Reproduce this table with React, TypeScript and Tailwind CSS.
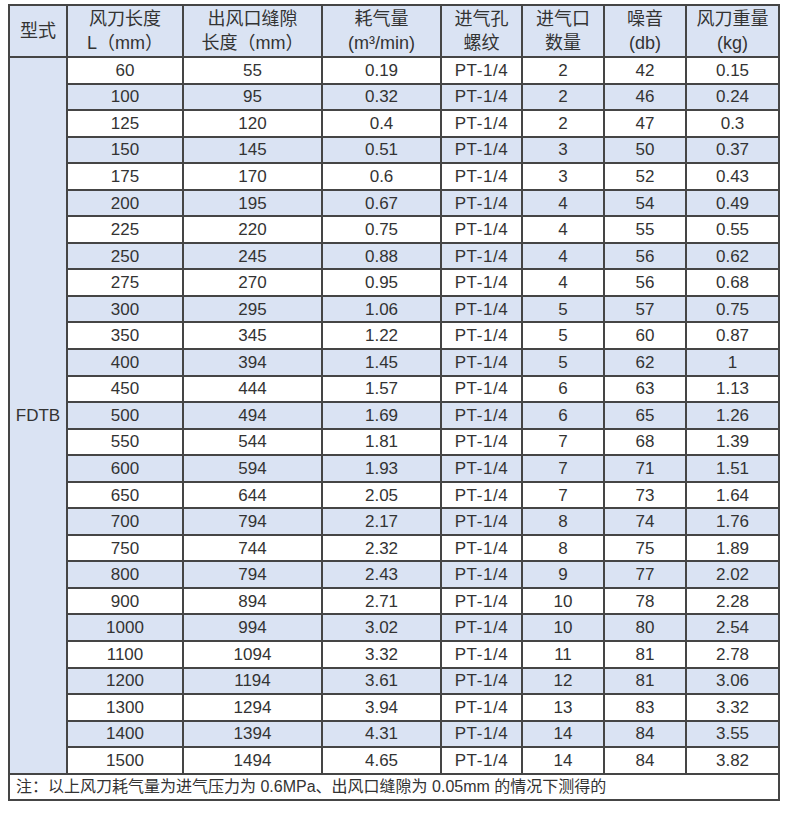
const rows: string[][] = [
  ["60", "55", "0.19", "2", "42", "0.15"],
  ["100", "95", "0.32", "2", "46", "0.24"],
  ["125", "120", "0.4", "2", "47", "0.3"],
  ["150", "145", "0.51", "3", "50", "0.37"],
  ["175", "170", "0.6", "3", "52", "0.43"],
  ["200", "195", "0.67", "4", "54", "0.49"],
  ["225", "220", "0.75", "4", "55", "0.55"],
  ["250", "245", "0.88", "4", "56", "0.62"],
  ["275", "270", "0.95", "4", "56", "0.68"],
  ["300", "295", "1.06", "5", "57", "0.75"],
  ["350", "345", "1.22", "5", "60", "0.87"],
  ["400", "394", "1.45", "5", "62", "1"],
  ["450", "444", "1.57", "6", "63", "1.13"],
  ["500", "494", "1.69", "6", "65", "1.26"],
  ["550", "544", "1.81", "7", "68", "1.39"],
  ["600", "594", "1.93", "7", "71", "1.51"],
  ["650", "644", "2.05", "7", "73", "1.64"],
  ["700", "794", "2.17", "8", "74", "1.76"],
  ["750", "744", "2.32", "8", "75", "1.89"],
  ["800", "794", "2.43", "9", "77", "2.02"],
  ["900", "894", "2.71", "10", "78", "2.28"],
  ["1000", "994", "3.02", "10", "80", "2.54"],
  ["1100", "1094", "3.32", "11", "81", "2.78"],
  ["1200", "1194", "3.61", "12", "81", "3.06"],
  ["1300", "1294", "3.94", "13", "83", "3.32"],
  ["1400", "1394", "4.31", "14", "84", "3.55"],
  ["1500", "1494", "4.65", "14", "84", "3.82"],
];

const headers: [string, string][] = [
  ["风刀长度", "L（mm）"],
  ["出风口缝隙", "长度（mm）"],
  ["耗气量", "(m³/min)"],
  ["进气孔", "螺纹"],
  ["进气口", "数量"],
  ["噪音", "(db)"],
  ["风刀重量", "(kg)"],
];

const App = () => {
  return (
    <div
      className="min-h-[825px] w-[790px] bg-white pl-[8px] pt-[4px] text-[#333]"
      style={{ fontFamily: '"Liberation Sans", "Noto Sans CJK SC", sans-serif' }}
    >
      <div className="grid w-[772px] grid-cols-[56px_114px_137px_117px_79px_80px_80px_91px] grid-rows-[50px_repeat(27,24.55px)_24px] gap-[2px] bg-[#454545] p-[2px]">
        {/* header */}
        <div className="flex items-center justify-center bg-[#dae3f3] text-[18px]">型式</div>
        {headers.map(([a, b]) => (
          <div
            key={a}
            className="flex flex-col items-center justify-center bg-[#dae3f3] text-[18px] leading-[24px]"
          >
            <span>{a}</span>
            <span>{b}</span>
          </div>
        ))}

        {/* model column */}
        <div className="col-start-1 row-span-27 row-start-2 flex items-center justify-center bg-[#dae3f3] text-[17px]">
          FDTB
        </div>

        {rows.map((r, i) => {
          const bg = i % 2 === 1 ? "bg-[#dae3f3]" : "bg-white";
          const cells = [r[0], r[1], r[2], "PT-1/4", r[3], r[4], r[5]];
          return cells.map((c, j) => (
            <div
              key={`${i}-${j}`}
              className={`flex items-center justify-center text-[17px] leading-none ${bg} ${j === 0 ? "col-start-2" : ""}`}
            >
              {c === "PT-1/4" ? <span className="tracking-[0.6px]">PT-1/4</span> : c}
            </div>
          ));
        })}

        {/* note */}
        <div className="col-span-8 flex items-center bg-white pl-[6px] text-[16px] leading-none">
          注：以上风刀耗气量为进气压力为 0.6MPa、出风口缝隙为 0.05mm 的情况下测得的
        </div>
      </div>
    </div>
  );
};

export default App;
